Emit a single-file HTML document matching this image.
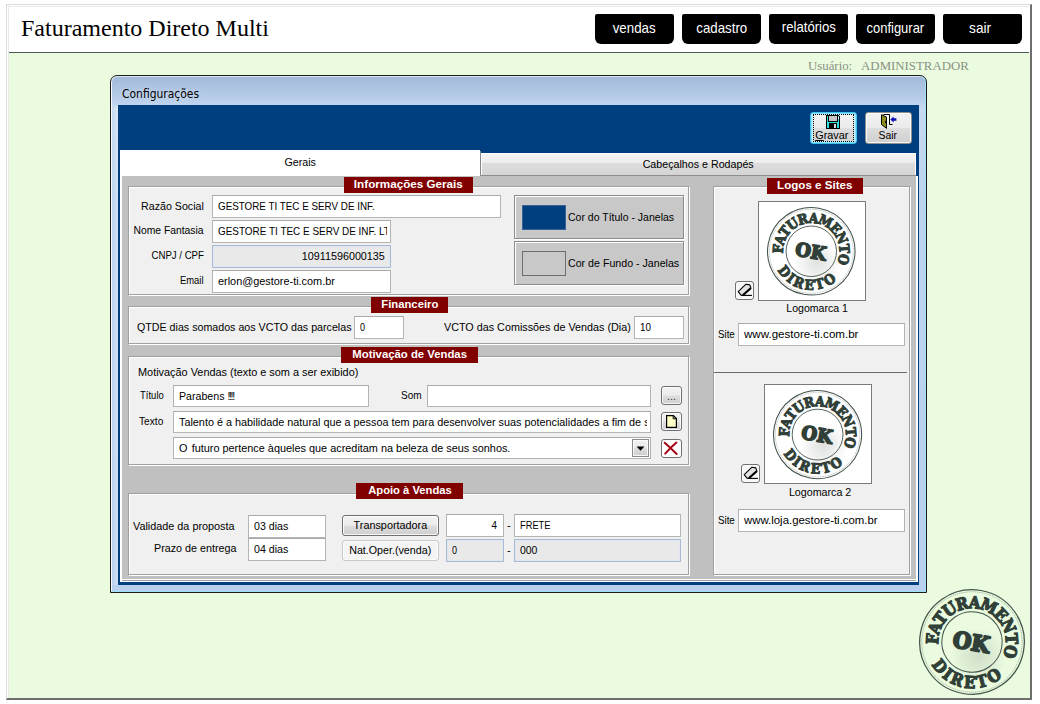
<!DOCTYPE html>
<html lang="pt-BR">
<head>
<meta charset="utf-8">
<title>Faturamento Direto Multi</title>
<style>
html,body{margin:0;padding:0;background:#fff;}
body{width:1040px;height:704px;position:relative;overflow:hidden;font-family:"Liberation Sans",Arial,sans-serif;font-size:11px;color:#000;}
.abs,.t,.inp,.badge,.grp,.btn{position:absolute;box-sizing:border-box;}
.s{display:inline-block;white-space:pre;text-indent:0;}
/* page frame */
#frame{left:6px;top:4px;width:1026px;height:696px;border-style:solid;border-width:1px 2px 2px 1px;border-color:#dadada #6e6e6e #6e6e6e #dadada;background:#fff;}
#frame2{left:8px;top:6px;width:1021px;height:692px;border:1px solid #e9e9e9;border-right:0;border-bottom:0;background:#fff;}
#hdr{left:9px;top:7px;width:1020px;height:46px;background:#fff;border-bottom:1px solid #4d5a4d;}
#main{left:9px;top:53px;width:1021px;height:645px;background:#eafbe0;}
#title{left:21px;top:13.5px;font-family:"Liberation Serif","Times New Roman",serif;font-size:24px;line-height:28px;white-space:nowrap;color:#000;}
.nav{position:absolute;top:14px;width:79px;height:30px;background:#000;border-radius:2px 2px 6px 6px;color:#fff;font-size:15px;line-height:30px;text-align:center;}
.nav .s{position:relative;top:-1px;}
#user{left:808px;top:58px;font-family:"Liberation Serif","Times New Roman",serif;font-size:13px;line-height:16px;color:#8a9183;white-space:pre;}
/* window */
#win{left:110px;top:75px;width:817px;height:518px;border:1px solid #1c1c1c;border-radius:7px 7px 0 0;background:linear-gradient(#a2bad9 0,#b6cce9 22px,#c6d9f0 32px,#bdd3ee 120px,#b9d1ee 100%);box-shadow:inset -1px 0 0 #9de0f9,inset 0 -1px 0 #9de0f9,inset 1px 0 0 rgba(255,255,255,.9),inset 0 1px 0 rgba(255,255,255,.6);}
#winl{left:112px;top:106px;width:6px;height:479px;background:linear-gradient(90deg,rgba(255,255,255,0),rgba(255,255,255,.35));}
#wtitle{left:122px;top:86px;text-shadow:0 0 5px rgba(255,255,255,.55);font-family:"DejaVu Sans","Liberation Sans",sans-serif;font-size:11.5px;line-height:16px;color:#000;white-space:nowrap;}
#client{left:118px;top:105px;width:801px;height:480px;background:#003f7f;}
#pane{left:120px;top:176px;width:798px;height:406px;background:#c0c0c0;border-left:2px solid #fff;border-right:2px solid #fff;border-bottom:1px solid #fff;box-shadow:inset 0 -1px 0 #a0a0a0,inset 0 -2px 0 #fff;}
#tab1{left:120px;top:150px;width:360px;height:26px;background:#fff;text-align:center;line-height:25px;}
#tabsep{left:480px;top:151px;width:1px;height:25px;background:#85858d;}
#tabsep2{left:480px;top:175px;width:436px;height:1px;background:#8e8e8e;}
#tab2{left:481px;top:153px;width:435px;height:22px;background:linear-gradient(#f4f4f4 0,#eeeeee 40%,#dddddd 44%,#d4d4d4 100%);border:1px solid #fff;border-bottom:0;text-align:center;line-height:20px;}
.grp{background:#f0f0f0;border:1px solid #a0a0a0;box-shadow:inset 1px 1px 0 #fff,1px 1px 0 #fff;}
.badge{background:#800000;color:#fff;font-weight:bold;font-size:11px;line-height:14px;height:16px;text-align:center;white-space:nowrap;}
.t{white-space:nowrap;line-height:14px;height:14px;font-size:11px;}
.r{text-align:right;}
.c{text-align:center;}
.inp{background:#fff;border:1px solid #b4b4b4;border-top-color:#a9a9a9;height:23px;line-height:20px;padding:0 0 0 4.5px;white-space:nowrap;overflow:hidden;font-size:11px;}
.dis{background:#e9e9e9;border:1px solid #a9bad3;box-shadow:inset 0 0 0 1px #dfe6f0;}
.cbtn{width:170px;height:44px;background:#c8c8c8;border:1px solid #8c8c8c;box-shadow:inset 1px 1px 0 #fff,1px 1px 0 #fff;box-sizing:border-box;}
.btn{border:1px solid #707070;border-radius:3px;background:linear-gradient(#f2f2f2 0,#ebebeb 48%,#dddddd 52%,#cfcfcf 100%);box-shadow:inset 0 0 0 1px rgba(255,255,255,.8);text-align:center;white-space:nowrap;}
</style>
</head>
<body>
<div id="frame" class="abs"></div>
<div id="frame2" class="abs"></div>
<div id="hdr" class="abs"></div>
<div id="main" class="abs"></div>
<div id="title" class="abs"><span class="s">Faturamento Direto Multi</span></div>
<div class="nav" style="left:595px"><span class="s" style="transform:scaleX(0.889);transform-origin:50% 50%">vendas</span></div>
<div class="nav" style="left:682px"><span class="s" style="transform:scaleX(0.886);transform-origin:50% 50%">cadastro</span></div>
<div class="nav" style="left:769px;line-height:27px"><span class="s" style="transform:scaleX(0.875);transform-origin:50% 50%">relatórios</span></div>
<div class="nav" style="left:856px"><span class="s" style="transform:scaleX(0.864);transform-origin:50% 50%">configurar</span></div>
<div class="nav" style="left:943px;text-indent:-4px"><span class="s" style="transform:scaleX(0.910);transform-origin:50% 50%">sair</span></div>
<div id="user" class="abs"><span class="s" style="transform:scaleX(0.987);transform-origin:0 50%">Usuário:   ADMINISTRADOR</span></div>

<div id="win" class="abs"></div>
<div id="wtitle" class="abs"><span class="s" style="transform:scaleX(0.935);transform-origin:0 50%">Configurações</span></div>
<div id="winl" class="abs"></div>
<div id="client" class="abs"></div>
<div id="tabsep" class="abs"></div><div id="tabsep2" class="abs"></div>
<div id="tab1" class="abs c"><span class="s" style="transform:scaleX(0.972);transform-origin:50% 50%">Gerais</span></div>
<div id="tab2" class="abs c"><span class="s" style="transform:scaleX(0.971);transform-origin:50% 50%">Cabeçalhos e Rodapés</span></div>
<div id="pane" class="abs"></div>

<!-- toolbar buttons -->
<div id="bgravar" class="btn" style="left:810px;top:112px;width:47px;height:32px;border-color:#3cc3ee;box-shadow:inset 0 0 0 1px #8fe4fa,inset 0 0 0 2px #c9f1fb;"></div>
<div class="abs" style="left:813px;top:114px;width:41px;height:28px;border:1px dotted #000;"></div>
<div class="t c" style="left:808.5px;top:128px;width:47px;"><span class="s" style="transform:scaleX(0.984);transform-origin:50% 50%"><u style="text-underline-offset:1px">G</u>ravar</span></div>
<div id="bsair" class="btn" style="left:865px;top:112px;width:47px;height:32px;border-color:#8e8f8f;"></div>
<div class="t c" style="left:864px;top:128px;width:47px;"><span class="s" style="transform:scaleX(0.946);transform-origin:50% 50%">Sair</span></div>

<!-- group 1 -->
<div class="grp" style="left:128px;top:186px;width:561px;height:109px;"></div>
<div class="badge c" style="left:344px;top:177px;width:129px;"><span class="s" style="transform:scaleX(1.061);transform-origin:50% 50%">Informações Gerais</span></div>
<div class="t r" style="left:128px;top:199px;width:76px;"><span class="s" style="transform:scaleX(0.969);transform-origin:100% 50%">Razão Social</span></div>
<div class="inp" style="left:212px;top:195px;width:289px;"><span class="s" style="transform:scaleX(0.894);transform-origin:0 50%">GESTORE TI TEC E SERV DE INF.</span></div>
<div class="t r" style="left:128px;top:223px;width:76px;"><span class="s" style="transform:scaleX(0.940);transform-origin:100% 50%">Nome Fantasia</span></div>
<div class="inp" style="left:212px;top:220px;width:179px;"><span class="s" style="transform:scaleX(0.903);transform-origin:0 50%">GESTORE TI TEC E SERV DE INF. LTDA</span></div>
<div class="abs" style="left:387px;top:221px;width:3px;height:21px;background:#fff"></div>
<div class="t r" style="left:128px;top:248px;width:76px;"><span class="s" style="transform:scaleX(0.875);transform-origin:100% 50%">CNPJ / CPF</span></div>
<div class="inp dis r" style="left:212px;top:245px;width:179px;padding-right:5px;"><span class="s" style="transform:scaleX(0.979);transform-origin:100% 50%">10911596000135</span></div>
<div class="t r" style="left:128px;top:273px;width:76px;"><span class="s" style="transform:scaleX(0.858);transform-origin:100% 50%">Email</span></div>
<div class="inp" style="left:212px;top:270px;width:179px;"><span class="s" style="transform:scaleX(0.989);transform-origin:0 50%">erlon@gestore-ti.com.br</span></div>
<div class="cbtn abs" style="left:514px;top:195px;"></div>
<div class="abs" style="left:522px;top:205px;width:44px;height:25px;background:#003f7f;border:1px solid #3a6292;box-sizing:border-box;"></div>
<div class="t" style="left:568px;top:210px;"><span class="s" style="transform:scaleX(0.955);transform-origin:0 50%">Cor do Título - Janelas</span></div>
<div class="cbtn abs" style="left:514px;top:241px;"></div>
<div class="abs" style="left:522px;top:251px;width:44px;height:25px;background:#c8c8c8;border:1px solid #6e6e6e;box-sizing:border-box;"></div>
<div class="t" style="left:568px;top:256px;"><span class="s" style="transform:scaleX(0.967);transform-origin:0 50%">Cor de Fundo - Janelas</span></div>

<!-- group 2 -->
<div class="grp" style="left:128px;top:306px;width:561px;height:38px;"></div>
<div class="badge c" style="left:371px;top:297px;width:77px;"><span class="s" style="transform:scaleX(1.025);transform-origin:50% 50%">Financeiro</span></div>
<div class="t" style="left:137px;top:320px;"><span class="s" style="transform:scaleX(0.970);transform-origin:0 50%">QTDE dias somados aos VCTO das parcelas</span></div>
<div class="inp" style="left:354px;top:316px;width:50px;"><span class="s" style="transform:scaleX(0.816);transform-origin:0 50%">0</span></div>
<div class="t" style="left:444px;top:320px;"><span class="s" style="transform:scaleX(0.980);transform-origin:0 50%">VCTO das Comissões de Vendas (Dia)</span></div>
<div class="inp" style="left:634px;top:316px;width:50px;"><span class="s" style="transform:scaleX(0.898);transform-origin:0 50%">10</span></div>

<!-- group 3 -->
<div class="grp" style="left:128px;top:356px;width:561px;height:109px;"></div>
<div class="badge c" style="left:341px;top:347px;width:137px;"><span class="s" style="transform:scaleX(1.031);transform-origin:50% 50%">Motivação de Vendas</span></div>
<div class="t" style="left:138px;top:365px;"><span class="s" style="transform:scaleX(0.990);transform-origin:0 50%">Motivação Vendas (texto e som a ser exibido)</span></div>
<div class="t" style="left:140px;top:388px;"><span class="s" style="transform:scaleX(0.865);transform-origin:0 50%">Título</span></div>
<div class="inp" style="left:173px;top:385px;width:196px;height:22px"><span class="s" style="transform:scaleX(0.965);transform-origin:0 50%">Parabens <span style="letter-spacing:-1.4px;">!!!!</span></span></div>
<div class="t" style="left:401px;top:388px;"><span class="s" style="transform:scaleX(0.910);transform-origin:0 50%">Som</span></div>
<div class="inp" style="left:427px;top:385px;width:224px;height:22px"></div>
<div class="btn" style="left:661px;top:386px;width:21px;height:19px;line-height:19px;color:#333;">...</div>
<div class="t" style="left:139px;top:414px;"><span class="s" style="transform:scaleX(0.924);transform-origin:0 50%">Texto</span></div>
<div class="abs" style="left:647px;top:412px;width:3px;height:20px;background:#fff;z-index:2"></div>
<div class="inp" style="left:173px;top:411px;width:478px;height:22px;"><span class="s" style="transform:scaleX(0.984);transform-origin:0 50%">Talento é a habilidade natural que a pessoa tem para desenvolver suas potencialidades a fim de se</span></div>
<div class="btn" style="left:661px;top:412px;width:21px;height:19px;"></div>
<div class="inp" style="left:173px;top:437px;width:478px;height:22px"><span class="s" style="transform:scaleX(0.989);transform-origin:0 50%"><span style="margin-right:1.2px">O</span> futuro pertence àqueles que acreditam na beleza de seus sonhos.</span></div>
<div class="btn" style="left:632px;top:439px;width:17px;height:18px;border-radius:0;border-color:#8a8a8a;"></div>
<div class="btn" style="left:661px;top:439px;width:21px;height:19px;background:#fff;"></div>

<!-- group 4 -->
<div class="grp" style="left:128px;top:493px;width:561px;height:82px;"></div>
<div class="badge c" style="left:356px;top:483px;width:107px;"><span class="s" style="transform:scaleX(1.020);transform-origin:50% 50%">Apoio à Vendas</span></div>
<div class="t" style="left:133px;top:519px;"><span class="s" style="transform:scaleX(0.984);transform-origin:0 50%">Validade da proposta</span></div>
<div class="inp" style="left:248px;top:515px;width:78px;"><span class="s" style="transform:scaleX(0.967);transform-origin:0 50%">03 dias</span></div>
<div class="t" style="left:154px;top:541px;"><span class="s" style="transform:scaleX(0.978);transform-origin:0 50%">Prazo de entrega</span></div>
<div class="inp" style="left:248px;top:538px;width:78px;"><span class="s" style="transform:scaleX(0.967);transform-origin:0 50%">04 dias</span></div>
<div class="btn c" style="left:342px;top:515px;width:97px;height:21px;line-height:18px;"><span class="s" style="transform:scaleX(0.985);transform-origin:50% 50%">Transportadora</span></div>
<div class="btn c" style="left:342px;top:540px;width:97px;height:21px;line-height:18px;background:#f4f4f4;border-color:#c9c9c9;"><span class="s" style="transform:scaleX(0.972);transform-origin:50% 50%">Nat.Oper.(venda)</span></div>
<div class="inp r" style="left:446px;top:514px;width:58px;padding-right:6px;"><span class="s" style="transform:scaleX(0.898);transform-origin:100% 50%">4</span></div>
<div class="t" style="left:507px;top:518px;">-</div>
<div class="inp" style="left:514px;top:514px;width:167px;"><span class="s" style="transform:scaleX(0.846);transform-origin:0 50%">FRETE</span></div>
<div class="inp dis" style="left:446px;top:539px;width:58px;"><span class="s" style="transform:scaleX(0.816);transform-origin:0 50%">0</span></div>
<div class="t" style="left:507px;top:543px;">-</div>
<div class="inp dis" style="left:514px;top:539px;width:167px;"><span class="s" style="transform:scaleX(0.948);transform-origin:0 50%">000</span></div>

<!-- group 5 -->
<div class="grp" style="left:713px;top:186px;width:197px;height:389px;"></div>
<div class="badge c" style="left:767px;top:178px;width:96px;"><span class="s" style="transform:scaleX(1.053);transform-origin:50% 50%">Logos e Sites</span></div>
<div class="abs" style="left:758px;top:201px;width:108px;height:100px;background:#fff;border:1px solid #7a7a7a;"></div>
<div class="btn" style="left:735px;top:281px;width:19px;height:19px;background:#f6f6f6"></div>
<div class="t c" style="left:758px;top:301px;width:119px;"><span class="s" style="transform:scaleX(0.961);transform-origin:50% 50%">Logomarca 1</span></div>
<div class="t" style="left:718px;top:327px;"><span class="s" style="transform:scaleX(0.886);transform-origin:0 50%">Site</span></div>
<div class="inp" style="left:738px;top:323px;width:167px;"><span class="s" style="transform:scaleX(1.052);transform-origin:0 50%">www.gestore-ti.com.br</span></div>
<div class="abs" style="left:714px;top:372px;width:193px;height:1px;background:#6a6a6a;"></div>
<div class="abs" style="left:764px;top:384px;width:108px;height:100px;background:#fff;border:1px solid #7a7a7a;"></div>
<div class="btn" style="left:741px;top:464px;width:19px;height:19px;background:#f6f6f6"></div>
<div class="t c" style="left:764px;top:485px;width:112px;"><span class="s" style="transform:scaleX(0.972);transform-origin:50% 50%">Logomarca 2</span></div>
<div class="t" style="left:718px;top:513px;"><span class="s" style="transform:scaleX(0.886);transform-origin:0 50%">Site</span></div>
<div class="inp" style="left:738px;top:509px;width:167px;"><span class="s" style="transform:scaleX(1.036);transform-origin:0 50%">www.loja.gestore-ti.com.br</span></div>

<!-- icons -->
<svg class="abs" style="left:826px;top:115px" width="14" height="14" viewBox="0 0 14 14" shape-rendering="crispEdges">
<path d="M0.5 0.5H12.5L13.5 1.5V13.5H0.5Z" fill="#2fdede" stroke="#000"/>
<rect x="2.5" y="0.5" width="9" height="6" fill="#c6c6c6" stroke="#000"/>
<rect x="3" y="8" width="8" height="5.5" fill="#000"/>
<rect x="8" y="9" width="2" height="3.5" fill="#d8d8d8"/>
<rect x="12" y="2" width="1" height="1.5" fill="#fff"/>
</svg>
<svg class="abs" style="left:880px;top:114px" width="17" height="15" viewBox="0 0 17 15">
<path d="M3.5 .5H9.5V10.5H12.5" fill="none" stroke="#000" stroke-width="1"/>
<rect x="4" y="1" width="5" height="9" fill="#fff"/>
<path d="M1.5 .7L6.5 3V14.3L1.5 10.5Z" fill="#8c8c1e" stroke="#000" stroke-width="1" stroke-linejoin="round"/>
<rect x="5" y="7" width="1" height="2" fill="#000"/>
<path d="M10.4 5.5L13.6 2.4V4.3H16.4V6.7H13.6V8.6Z" fill="#0a0ab4"/>
</svg>
<!-- eraser icons -->
<svg class="abs" style="left:736.5px;top:283px" width="16" height="14" viewBox="0 0 16 14">
<path d="M1.2 8.6L9 1.2L12.8 1.9L14 5.4L6.2 12.3L4.2 12.3Z" fill="#e2e2e2" stroke="#000" stroke-width="1.1" stroke-linejoin="round"/>
<path d="M13.6 5.2L6 11.9" stroke="#000" stroke-width="2"/><path d="M4.5 12.4H15" stroke="#000" stroke-width="1.1"/>
</svg>
<svg class="abs" style="left:742.5px;top:466px" width="16" height="14" viewBox="0 0 16 14">
<path d="M1.2 8.6L9 1.2L12.8 1.9L14 5.4L6.2 12.3L4.2 12.3Z" fill="#e2e2e2" stroke="#000" stroke-width="1.1" stroke-linejoin="round"/>
<path d="M13.6 5.2L6 11.9" stroke="#000" stroke-width="2"/><path d="M4.5 12.4H15" stroke="#000" stroke-width="1.1"/>
</svg>
<!-- page icon -->
<svg class="abs" style="left:666px;top:415px" width="11" height="13" viewBox="0 0 11 13">
<path d="M.6 .6H7.4L10.4 3.6V12.4H.6Z" fill="#ffffc6" stroke="#000" stroke-width="1.2"/>
<path d="M7.2 .6V3.8H10.4" fill="none" stroke="#000" stroke-width="1"/>
</svg>
<!-- red X -->
<svg class="abs" style="left:663px;top:441px" width="16" height="15" viewBox="0 0 16 15">
<path d="M1.6 1.8C5 4.5 9 8.5 13.6 13" stroke="#a5000f" stroke-width="2" fill="none" stroke-linecap="round"/>
<path d="M13.4 1.6C10 4.5 6 8.5 2.2 12.6" stroke="#a5000f" stroke-width="2" fill="none" stroke-linecap="round"/>
</svg>
<!-- dropdown arrow -->
<svg class="abs" style="left:636px;top:446px" width="9" height="5" viewBox="0 0 9 5"><path d="M.5 .5H8.5L4.5 4.8Z" fill="#000"/></svg>

<svg class="abs" style="left:916.6px;top:587.3px" width="110.0" height="110.0" viewBox="-55.00 -55.00 110.00 110.00">
<radialGradient id="sma"><stop offset="0" stop-color="#8a958c" stop-opacity=".28"/><stop offset=".6" stop-color="#8a958c" stop-opacity=".12"/><stop offset="1" stop-color="#8a958c" stop-opacity="0"/></radialGradient>
<g transform="rotate(10)">
<circle r="28" cx="9" cy="12" fill="url(#sma)"/>
<circle r="52.3" fill="none" stroke="#303f37" stroke-width="1.25" opacity=".9"/>
<circle r="50.2" fill="none" stroke="#303f37" stroke-width=".5" stroke-dasharray="1.2 .8" opacity=".7"/>
<circle r="30.2" fill="none" stroke="#303f37" stroke-width="1" opacity=".9"/>
<path id="pta" d="M-38.78 8.95A39.8 39.8 0 1 1 38.78 8.95" fill="none"/>
<path id="pba" d="M-31.68 24.75A40.2 40.2 0 0 0 31.68 24.75" fill="none"/>
<g fill="#303f37" stroke="#303f37" stroke-width="1.2" stroke-linejoin="round" style="font-family:'DejaVu Serif Condensed','DejaVu Serif','Liberation Serif',serif;font-weight:700;font-stretch:condensed">
<text font-size="16.6" dy="6.0"><textPath href="#pta" textLength="143.1" lengthAdjust="spacing">FATURAMENTO</textPath></text>
<text font-size="16.6" dy="6.0"><textPath href="#pba" textLength="73.0" lengthAdjust="spacing">DIRETO</textPath></text>
<text font-size="22.4" text-anchor="middle" x="-.6" y="8.1" textLength="37" lengthAdjust="spacingAndGlyphs" stroke-width="1.9">OK</text>
</g></g></svg>
<svg class="abs" style="left:764.7px;top:204.7px" width="92.6" height="92.6" viewBox="-55.39 -55.39 110.79 110.79">
<radialGradient id="smb"><stop offset="0" stop-color="#8a958c" stop-opacity=".28"/><stop offset=".6" stop-color="#8a958c" stop-opacity=".12"/><stop offset="1" stop-color="#8a958c" stop-opacity="0"/></radialGradient>
<g transform="rotate(10)">
<circle r="28" cx="9" cy="12" fill="url(#smb)"/>
<circle r="52.3" fill="none" stroke="#303f37" stroke-width="1.25" opacity=".9"/>
<circle r="50.2" fill="none" stroke="#303f37" stroke-width=".5" stroke-dasharray="1.2 .8" opacity=".7"/>
<circle r="30.2" fill="none" stroke="#303f37" stroke-width="1" opacity=".9"/>
<path id="ptb" d="M-38.78 8.95A39.8 39.8 0 1 1 38.78 8.95" fill="none"/>
<path id="pbb" d="M-31.68 24.75A40.2 40.2 0 0 0 31.68 24.75" fill="none"/>
<g fill="#303f37" stroke="#303f37" stroke-width="1.2" stroke-linejoin="round" style="font-family:'DejaVu Serif Condensed','DejaVu Serif','Liberation Serif',serif;font-weight:700;font-stretch:condensed">
<text font-size="16.6" dy="6.0"><textPath href="#ptb" textLength="143.1" lengthAdjust="spacing">FATURAMENTO</textPath></text>
<text font-size="16.6" dy="6.0"><textPath href="#pbb" textLength="73.0" lengthAdjust="spacing">DIRETO</textPath></text>
<text font-size="22.4" text-anchor="middle" x="-.6" y="8.1" textLength="37" lengthAdjust="spacingAndGlyphs" stroke-width="1.9">OK</text>
</g></g></svg>
<svg class="abs" style="left:770.9px;top:388.4px" width="93.2" height="93.2" viewBox="-55.38 -55.38 110.75 110.75">
<radialGradient id="smc"><stop offset="0" stop-color="#8a958c" stop-opacity=".28"/><stop offset=".6" stop-color="#8a958c" stop-opacity=".12"/><stop offset="1" stop-color="#8a958c" stop-opacity="0"/></radialGradient>
<g transform="rotate(10)">
<circle r="28" cx="9" cy="12" fill="url(#smc)"/>
<circle r="52.3" fill="none" stroke="#303f37" stroke-width="1.25" opacity=".9"/>
<circle r="50.2" fill="none" stroke="#303f37" stroke-width=".5" stroke-dasharray="1.2 .8" opacity=".7"/>
<circle r="30.2" fill="none" stroke="#303f37" stroke-width="1" opacity=".9"/>
<path id="ptc" d="M-38.78 8.95A39.8 39.8 0 1 1 38.78 8.95" fill="none"/>
<path id="pbc" d="M-31.68 24.75A40.2 40.2 0 0 0 31.68 24.75" fill="none"/>
<g fill="#303f37" stroke="#303f37" stroke-width="1.2" stroke-linejoin="round" style="font-family:'DejaVu Serif Condensed','DejaVu Serif','Liberation Serif',serif;font-weight:700;font-stretch:condensed">
<text font-size="16.6" dy="6.0"><textPath href="#ptc" textLength="143.1" lengthAdjust="spacing">FATURAMENTO</textPath></text>
<text font-size="16.6" dy="6.0"><textPath href="#pbc" textLength="73.0" lengthAdjust="spacing">DIRETO</textPath></text>
<text font-size="22.4" text-anchor="middle" x="-.6" y="8.1" textLength="37" lengthAdjust="spacingAndGlyphs" stroke-width="1.9">OK</text>
</g></g></svg>

</body>
</html>
